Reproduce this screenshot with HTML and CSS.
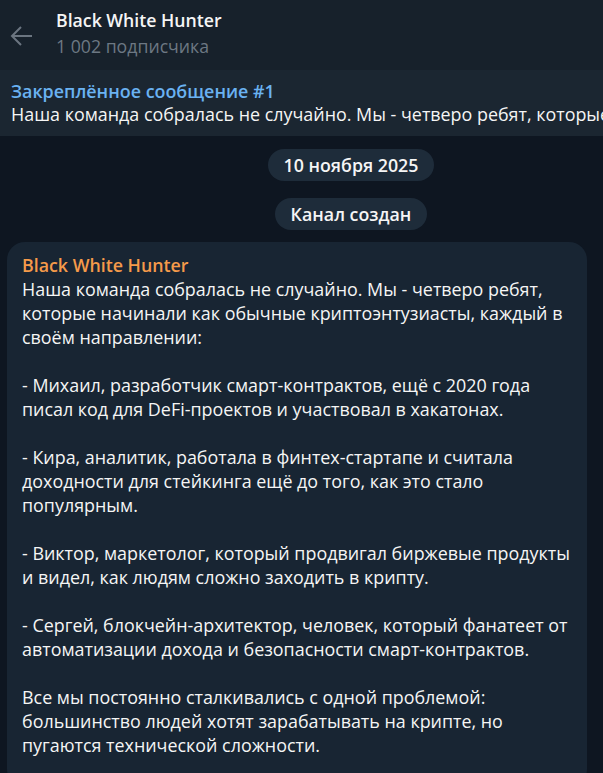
FILE: index.html
```html
<!DOCTYPE html>
<html lang="ru">
<head>
  <meta charset="UTF-8" />
  <title>Black White Hunter</title>
  <link rel="stylesheet" href="styles.css">
</head>
<body>

  <!-- Header -->
  <div class="header">
    <div class="back">
      <svg width="24" height="24" viewBox="0 0 24 24">
        <path d="M22 12H2.5M11 3L2 12l9 9" fill="none" stroke="#6b7580" stroke-width="2"/>
      </svg>
    </div>
    <div class="header-info">
      <div class="header-title">Black White Hunter</div>
      <div class="header-sub">1 002 подписчика</div>
    </div>
  </div>

  <!-- Pinned message -->
  <div class="pinned">
    <div class="pin-bar">
      <span class="active"></span>
      <span></span>
      <span></span>
    </div>
    <div class="pin-text">
      <div class="pin-title">Закреплённое сообщение #1</div>
      <div class="pin-preview">Наша команда собралась не случайно. Мы - четверо ребят, которые начинали как обычные криптоэнтузиасты</div>
    </div>
  </div>

  <!-- Chat -->
  <div class="chat">
    <div class="service"><span class="pill">10 ноября 2025</span></div>
    <div class="service"><span class="pill">Канал создан</span></div>

    <div class="bubble">
      <div class="author">Black White Hunter</div>
      <div class="text">Наша команда собралась не случайно. Мы - четверо ребят, которые начинали как обычные криптоэнтузиасты, каждый в своём направлении:

- Михаил, разработчик смарт-контрактов, ещё с 2020 года писал код для DeFi-проектов и участвовал в хакатонах.

- Кира, аналитик, работала в финтех-стартапе и считала доходности для стейкинга ещё до того, как это стало популярным.

- Виктор, маркетолог, который продвигал биржевые продукты и видел, как людям сложно заходить в крипту.

- Сергей, блокчейн-архитектор, человек, который фанатеет от автоматизации дохода и безопасности смарт-контрактов.

Все мы постоянно сталкивались с одной проблемой: большинство людей хотят зарабатывать на крипте, но пугаются технической сложности.</div>
    </div>
  </div>

</body>
</html>
```

FILE: styles.css
```css
body {
  margin: 0;
  height: 773px;
  overflow: hidden;
  font-family: "Open Sans", "Noto Sans", sans-serif;
  background-color: #0e1621;
  color: #f5f5f5;
}

/* Header */
.header {
  height: 70px;
  background: #17212b;
  display: flex;
  align-items: center;
}

.back {
  width: 56px;
  display: flex;
  padding-left: 10px;
  box-sizing: border-box;
  margin-top: 1px;
}

.header-info {
  margin-top: 0;
}

.header-title {
  font-size: 17.7px;
  font-weight: 600;
  color: #f5f5f5;
  line-height: 22px;
}

.header-sub {
  font-size: 17.7px;
  color: #6d7883;
  line-height: 30px;
}

/* Pinned message */
.pinned {
  height: 66px;
  background: #1b2631;
  display: flex;
  align-items: center;
  overflow: hidden;
}

.pin-bar {
  width: 3px;
  height: 52px;
  display: flex;
  flex-direction: column;
  gap: 2px;
  margin-right: 11px;
}

.pin-bar span {
  flex: 1;
  background: #2e4a64;
  border-radius: 0 2px 2px 0;
}

.pin-bar span.active {
  background: #5eaef0;
}

.pin-text {
  white-space: nowrap;
  font-size: 17.9px;
  line-height: 23px;
}

.pin-title {
  color: #6ab2f2;
  font-weight: 600;
}

.pin-preview {
  color: #f5f5f5;
}

/* Chat */
.chat {
  padding: 13px 16px 0 7px;
}

.service {
  text-align: center;
  margin-bottom: 17px;
  padding-left: 108px;
}

.pill {
  display: inline-block;
  background: #1e2c3a;
  color: #f5f5f5;
  font-size: 17.8px;
  font-weight: 600;
  line-height: 32px;
  padding: 0 16px;
  border-radius: 16px;
}

.bubble {
  background: #182533;
  border-radius: 18px;
  padding: 11px 10px 30px 15px;
  margin-top: -5px;
}

.author {
  color: #f59a4a;
  font-size: 17.8px;
  font-weight: 600;
  line-height: 24px;
}

.text {
  font-size: 17.9px;
  line-height: 24px;
  white-space: pre-wrap;
}
```
